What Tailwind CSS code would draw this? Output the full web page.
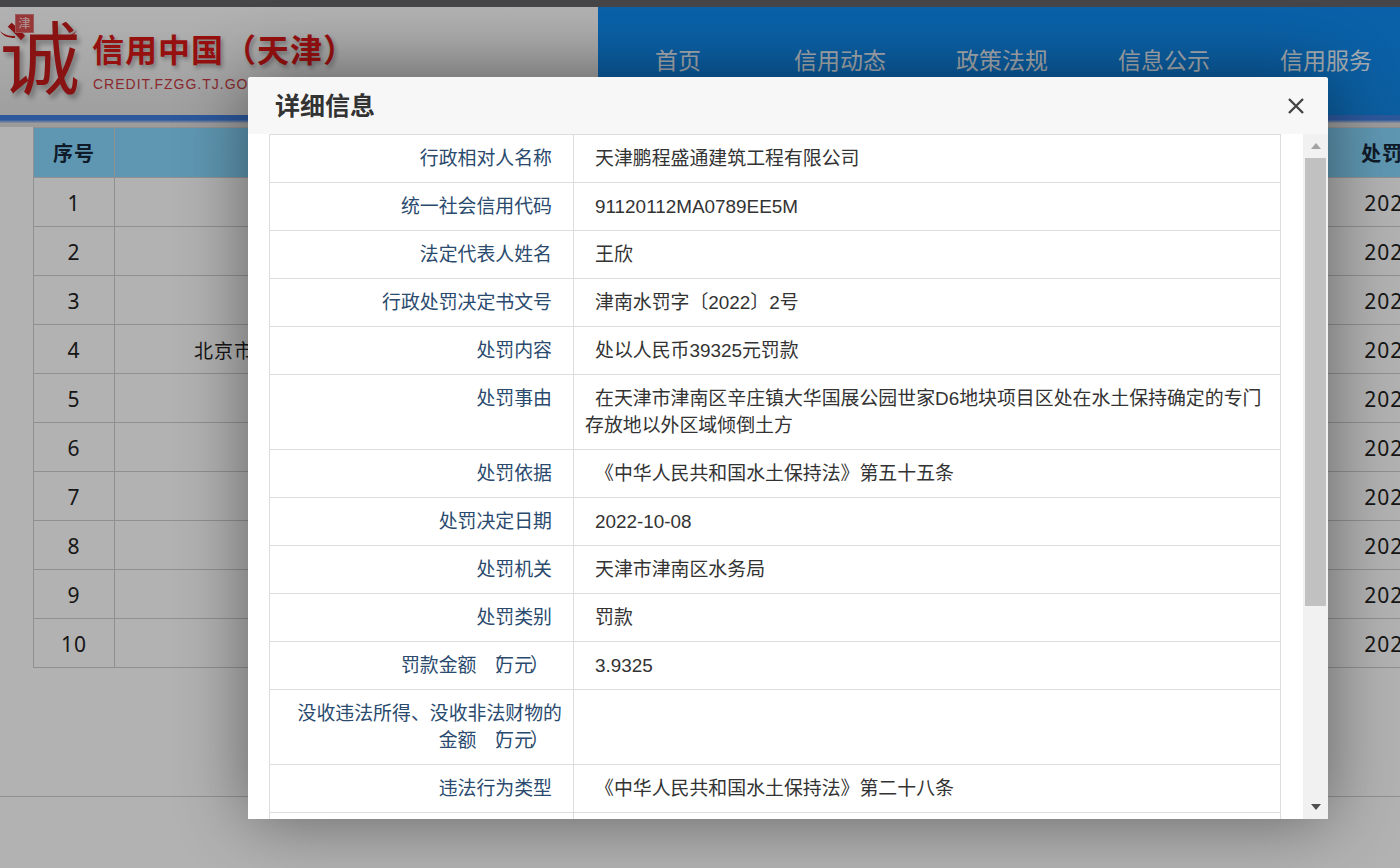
<!DOCTYPE html>
<html lang="zh-CN">
<head>
  <meta charset="UTF-8" />
  <title>信用中国（天津）</title>
  <script src="https://cdn.jsdelivr.net/npm/@tailwindcss/browser@4"></script>
</head>
<body class="relative h-[868px] w-[1400px] overflow-hidden bg-white font-['Liberation_Sans','Noto_Sans_CJK_SC',sans-serif]">

  <!-- Page behind the dialog -->
  <div class="h-[7px] bg-[#656569]"></div>

  <header class="flex h-[108px]">
    <div class="relative w-[598px] flex-none bg-gradient-to-b from-white to-[#e4e4e4]">
      <!-- Logo -->
      <div class="absolute left-0 top-[14px] w-[78px] text-center text-[80px] font-normal leading-[80px] text-[#c41a1a] [text-shadow:3px_4px_5px_rgba(0,0,0,0.3)]">诚</div>
      <svg class="absolute left-0 top-[22px]" width="78" height="12" viewBox="0 0 78 12" fill="none">
        <path d="M0 2 C4 6 9 7 15 7 L15 9 C8 9 3 7 0 2Z" fill="#c41a1a"/>
        <path d="M77 1 C73 6 67 8 60 9 L60 11 C68 10 74 7 77 1Z" fill="#c41a1a"/>
      </svg>
      <div class="absolute left-[15px] top-[7px] flex h-[19px] w-[19px] items-center justify-center border border-[#d98080] bg-[#d85050] text-[12px] leading-none text-[#ffd9d9]">津</div>
      <div class="absolute left-[92px] top-[24px] text-[32px] font-bold leading-[40px] tracking-[1px] text-[#d81818] [text-shadow:2px_3px_4px_rgba(0,0,0,0.3)]">信用中国（天津）</div>
      <div class="absolute left-[93px] top-[68px] text-[14px] leading-[18px] tracking-[1px] text-[#c63c44]">CREDIT.FZGG.TJ.GOV.CN</div>
    </div>
    <nav class="ml-[-1px] flex min-w-0 flex-1 bg-gradient-to-b from-[#0e8cf3] to-[#1287e5] pt-[38px]">
      <a class="w-[162px] flex-none text-center text-[23px] leading-[32px] text-white/95">首页</a>
      <a class="w-[162px] flex-none text-center text-[23px] leading-[32px] text-white/95">信用动态</a>
      <a class="w-[162px] flex-none text-center text-[23px] leading-[32px] text-white/95">政策法规</a>
      <a class="w-[162px] flex-none text-center text-[23px] leading-[32px] text-white/95">信息公示</a>
      <a class="w-[162px] flex-none text-center text-[23px] leading-[32px] text-white/95">信用服务</a>
    </nav>
  </header>
  <div class="h-[12px] bg-gradient-to-b from-[#3f7fe0] from-40% to-[#e0e0e0] to-70%"></div>

  <main class="ml-[33px] w-[1367px] overflow-hidden">
    <table class="w-[1514px] table-fixed border-collapse text-center text-[21px] tracking-[1px] text-[#222] font-['Noto_Sans','Noto_Sans_CJK_SC',sans-serif]">
      <colgroup>
        <col class="w-[81px]" />
        <col class="w-[1186px]" />
        <col class="w-[247px]" />
      </colgroup>
      <thead class="[&_th]:pt-[2px]">
        <tr class="h-[50px] bg-[#88d8ff] text-[20px] font-bold text-[#16283a]">
          <th class="border border-[#d0d0d0]">序号</th>
          <th class="border border-[#d0d0d0]"></th>
          <th class="border border-[#d0d0d0]">处罚决定日期</th>
        </tr>
      </thead>
      <tbody class="[&_td]:pt-[4px]">
        <tr class="h-[49px]"><td class="border border-[#cfcfcf]">1</td><td class="border border-[#cfcfcf]"></td><td class="border border-[#cfcfcf]">2022-10-08</td></tr>
        <tr class="h-[49px]"><td class="border border-[#cfcfcf]">2</td><td class="border border-[#cfcfcf]"></td><td class="border border-[#cfcfcf]">2022-10-08</td></tr>
        <tr class="h-[49px]"><td class="border border-[#cfcfcf]">3</td><td class="border border-[#cfcfcf]"></td><td class="border border-[#cfcfcf]">2022-10-08</td></tr>
        <tr class="h-[49px]"><td class="border border-[#cfcfcf]">4</td><td class="border border-[#cfcfcf] pl-[79px] text-left text-[19px]">北京市</td><td class="border border-[#cfcfcf]">2022-10-08</td></tr>
        <tr class="h-[49px]"><td class="border border-[#cfcfcf]">5</td><td class="border border-[#cfcfcf]"></td><td class="border border-[#cfcfcf]">2022-10-08</td></tr>
        <tr class="h-[49px]"><td class="border border-[#cfcfcf]">6</td><td class="border border-[#cfcfcf]"></td><td class="border border-[#cfcfcf]">2022-10-08</td></tr>
        <tr class="h-[49px]"><td class="border border-[#cfcfcf]">7</td><td class="border border-[#cfcfcf]"></td><td class="border border-[#cfcfcf]">2022-10-08</td></tr>
        <tr class="h-[49px]"><td class="border border-[#cfcfcf]">8</td><td class="border border-[#cfcfcf]"></td><td class="border border-[#cfcfcf]">2022-10-08</td></tr>
        <tr class="h-[49px]"><td class="border border-[#cfcfcf]">9</td><td class="border border-[#cfcfcf]"></td><td class="border border-[#cfcfcf]">2022-10-08</td></tr>
        <tr class="h-[49px]"><td class="border border-[#cfcfcf]">10</td><td class="border border-[#cfcfcf]"></td><td class="border border-[#cfcfcf]">2022-10-08</td></tr>
      </tbody>
    </table>
  </main>

  <footer class="mt-[128px] border-t border-[#cfcfcf]"></footer>

  <!-- Backdrop -->
  <div class="absolute inset-0 bg-black/30"></div>

  <!-- Dialog -->
  <div class="absolute left-[248px] top-[77px] flex h-[742px] w-[1080px] flex-col rounded-t-[3px] bg-white shadow-[0_0_70px_rgba(0,0,0,0.45)]">
    <div class="flex h-[57px] flex-none items-center justify-between rounded-t-[3px] bg-[#f7f7f7] pl-[27px] pr-[23px] pt-[1px]">
      <h2 class="text-[25px] font-bold leading-[30px] text-[#333]">详细信息</h2>
      <svg width="18" height="18" viewBox="0 0 18 18" fill="none" stroke="#444" stroke-width="2.400"><path d="M2 2 L16 16 M16 2 L2 16"/></svg>
    </div>

    <div class="flex min-h-0 flex-1">
      <div class="min-w-0 flex-1 overflow-hidden pl-[21px] pr-[22px]">
        <table class="w-[1011px] table-fixed border-collapse border border-[#ddd] text-[18.900px] leading-[27px]">
          <colgroup>
            <col class="w-[304px]" />
            <col class="w-[707px]" />
          </colgroup>
          <tbody>
            <tr>
              <th class="border border-[#ddd] py-[10px] pl-[11px] pr-[11px] text-right font-normal text-[#2a4a6e] after:inline-block after:w-[10px] after:content-['']">行政相对人名称</th>
              <td class="border border-[#ddd] py-[10px] pl-[11px] pr-[11px] indent-[10px] text-[#333]">天津鹏程盛通建筑工程有限公司</td>
            </tr>
            <tr>
              <th class="border border-[#ddd] py-[10px] pl-[11px] pr-[11px] text-right font-normal text-[#2a4a6e] after:inline-block after:w-[10px] after:content-['']">统一社会信用代码</th>
              <td class="border border-[#ddd] py-[10px] pl-[11px] pr-[11px] indent-[10px] text-[#333]">91120112MA0789EE5M</td>
            </tr>
            <tr>
              <th class="border border-[#ddd] py-[10px] pl-[11px] pr-[11px] text-right font-normal text-[#2a4a6e] after:inline-block after:w-[10px] after:content-['']">法定代表人姓名</th>
              <td class="border border-[#ddd] py-[10px] pl-[11px] pr-[11px] indent-[10px] text-[#333]">王欣</td>
            </tr>
            <tr>
              <th class="border border-[#ddd] py-[10px] pl-[11px] pr-[11px] text-right font-normal text-[#2a4a6e] after:inline-block after:w-[10px] after:content-['']">行政处罚决定书文号</th>
              <td class="border border-[#ddd] py-[10px] pl-[11px] pr-[11px] indent-[10px] text-[#333]">津南水罚字〔2022〕2号</td>
            </tr>
            <tr>
              <th class="border border-[#ddd] py-[10px] pl-[11px] pr-[11px] text-right font-normal text-[#2a4a6e] after:inline-block after:w-[10px] after:content-['']">处罚内容</th>
              <td class="border border-[#ddd] py-[10px] pl-[11px] pr-[11px] indent-[10px] text-[#333]">处以人民币39325元罚款</td>
            </tr>
            <tr>
              <th class="border border-[#ddd] py-[10px] pl-[11px] pr-[11px] text-right align-top font-normal text-[#2a4a6e] after:inline-block after:w-[10px] after:content-['']">处罚事由</th>
              <td class="border border-[#ddd] py-[10px] pl-[11px] pr-[11px] indent-[10px] text-[#333]">在天津市津南区辛庄镇大华国展公园世家D6地块项目区处在水土保持确定的专门存放地以外区域倾倒土方</td>
            </tr>
            <tr>
              <th class="border border-[#ddd] py-[10px] pl-[11px] pr-[11px] text-right font-normal text-[#2a4a6e] after:inline-block after:w-[10px] after:content-['']">处罚依据</th>
              <td class="border border-[#ddd] py-[10px] pl-[11px] pr-[11px] indent-[10px] text-[#333]">《中华人民共和国水土保持法》第五十五条</td>
            </tr>
            <tr>
              <th class="border border-[#ddd] py-[10px] pl-[11px] pr-[11px] text-right font-normal text-[#2a4a6e] after:inline-block after:w-[10px] after:content-['']">处罚决定日期</th>
              <td class="border border-[#ddd] py-[10px] pl-[11px] pr-[11px] indent-[10px] text-[#333]">2022-10-08</td>
            </tr>
            <tr>
              <th class="border border-[#ddd] py-[10px] pl-[11px] pr-[11px] text-right font-normal text-[#2a4a6e] after:inline-block after:w-[10px] after:content-['']">处罚机关</th>
              <td class="border border-[#ddd] py-[10px] pl-[11px] pr-[11px] indent-[10px] text-[#333]">天津市津南区水务局</td>
            </tr>
            <tr>
              <th class="border border-[#ddd] py-[10px] pl-[11px] pr-[11px] text-right font-normal text-[#2a4a6e] after:inline-block after:w-[10px] after:content-['']">处罚类别</th>
              <td class="border border-[#ddd] py-[10px] pl-[11px] pr-[11px] indent-[10px] text-[#333]">罚款</td>
            </tr>
            <tr>
              <th class="border border-[#ddd] py-[10px] pl-[11px] pr-[11px] text-right font-normal text-[#2a4a6e] after:inline-block after:w-[10px] after:content-['']">罚款金额<span class="inline-block translate-x-[7px]">（</span>万元<span class="inline-block -translate-x-[3px]">）</span></th>
              <td class="border border-[#ddd] py-[10px] pl-[11px] pr-[11px] indent-[10px] text-[#333]">3.9325</td>
            </tr>
            <tr>
              <th class="border border-[#ddd] py-[10px] pl-[11px] pr-[11px] text-right font-normal text-[#2a4a6e] after:inline-block after:w-[10px] after:content-['']">没收违法所得、没收非法财物的金额<span class="inline-block translate-x-[7px]">（</span>万元<span class="inline-block -translate-x-[3px]">）</span></th>
              <td class="border border-[#ddd] py-[10px] pl-[11px] pr-[11px] indent-[10px] text-[#333]"></td>
            </tr>
            <tr>
              <th class="border border-[#ddd] py-[10px] pl-[11px] pr-[11px] text-right font-normal text-[#2a4a6e] after:inline-block after:w-[10px] after:content-['']">违法行为类型</th>
              <td class="border border-[#ddd] py-[10px] pl-[11px] pr-[11px] indent-[10px] text-[#333]">《中华人民共和国水土保持法》第二十八条</td>
            </tr>
            <tr class="h-[48px]">
              <th class="border border-[#ddd]"></th>
              <td class="border border-[#ddd]"></td>
            </tr>
          </tbody>
        </table>
      </div>

      <!-- Scrollbar -->
      <div class="flex w-[25px] flex-none flex-col items-center bg-[#f1f1f1]">
        <div class="flex h-[24px] w-full flex-none items-center justify-center">
          <svg width="10" height="6" viewBox="0 0 10 6"><path d="M5 0 L10 6 L0 6Z" fill="#a3a3a3"/></svg>
        </div>
        <div class="h-[448px] w-[21px] flex-none bg-[#c1c1c1]"></div>
        <div class="flex-1"></div>
        <div class="flex h-[24px] w-full flex-none items-center justify-center">
          <svg width="10" height="6" viewBox="0 0 10 6"><path d="M0 0 L10 0 L5 6Z" fill="#505050"/></svg>
        </div>
      </div>
    </div>
  </div>

</body>
</html>
